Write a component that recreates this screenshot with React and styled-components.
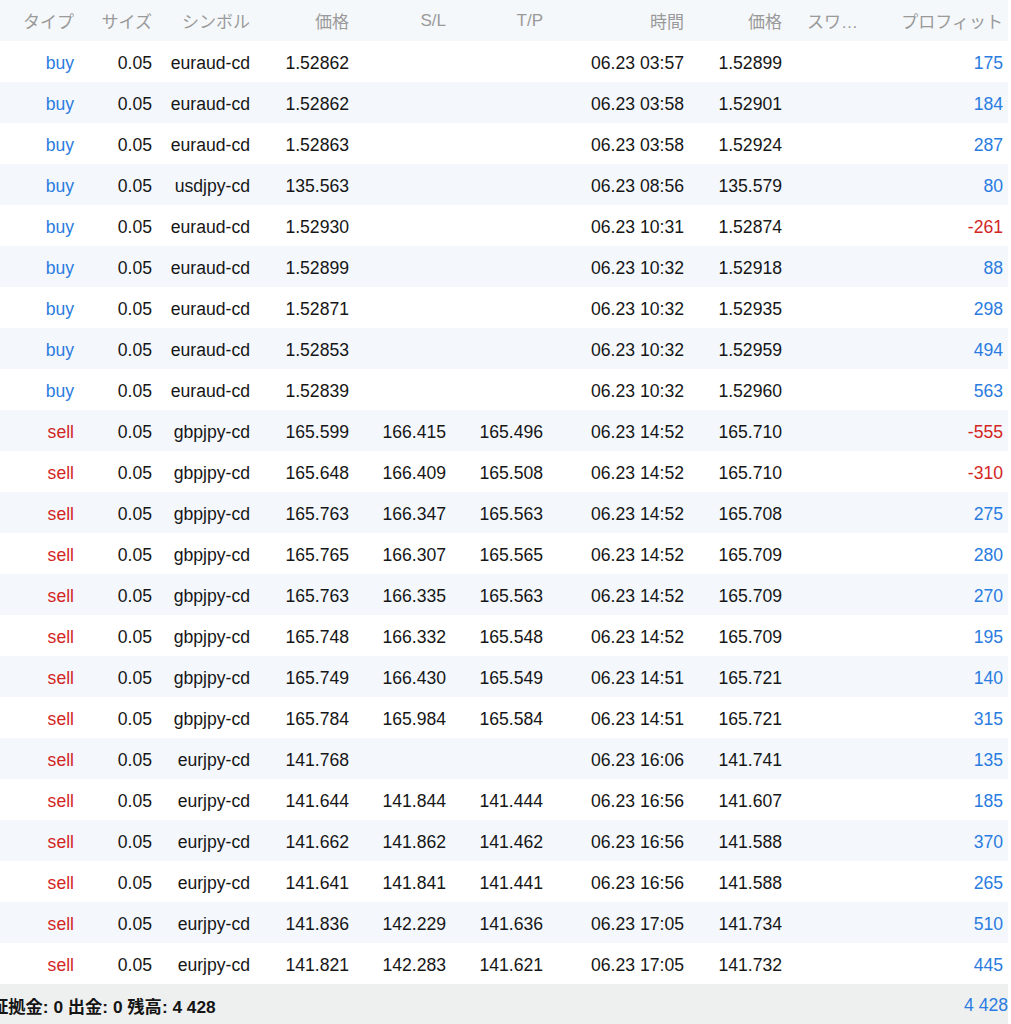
import React from "react";
import styled, { createGlobalStyle } from "styled-components";

const GlobalStyle = createGlobalStyle`
  html, body {
    margin: 0;
    padding: 0;
    background: #ffffff;
  }
  body {
    font-family: "Liberation Sans", "Noto Sans CJK JP", sans-serif;
    -webkit-font-smoothing: antialiased;
  }
`;

const COLS = "74px 78px 98px 99px 97px 97px 141px 98px 80px 141px";

const Page = styled.div`
  width: 1008px;
  height: 1024px;
  overflow: hidden;
  display: flex;
  flex-direction: column;
`;

const Header = styled.div`
  display: grid;
  grid-template-columns: ${COLS};
  height: 41px;
  align-items: center;
  background: #f5f8fb;
  color: #9a9a9a;
  font-size: 17px;
  font-family: "Liberation Sans", "Noto Sans CJK JP", sans-serif;
`;

const HeadCell = styled.div`
  text-align: ${(p) => (p.$left ? "left" : "right")};
  padding-left: ${(p) => (p.$left ? "25px" : "0")};
  white-space: nowrap;
  overflow: hidden;
`;

const Row = styled.div`
  box-sizing: border-box;
  display: grid;
  grid-template-columns: ${COLS};
  height: 41px;
  padding-top: 3px;
  align-items: center;
  background: ${(p) => (p.$alt ? "#f4f8fd" : "#ffffff")};
  font-size: 17.6px;
  color: #161616;
`;

const Cell = styled.div`
  text-align: right;
  white-space: nowrap;
  color: ${(p) => p.$color || "inherit"};
`;

const Footer = styled.div`
  box-sizing: border-box;
  height: 40px;
  padding-top: 2px;
  display: flex;
  align-items: center;
  justify-content: space-between;
  background: #eef0f0;
  overflow: hidden;
`;

const Summary = styled.div`
  margin-left: -9px;
  font-size: 17.3px;
  font-weight: bold;
  color: #151515;
  white-space: nowrap;
`;

const Total = styled.div`
  color: #2b7ce0;
  font-size: 17.6px;
`;

const BLUE = "#2b7ce0";
const RED = "#d3261f";

const rows = [
  ["buy", "euraud-cd", "1.52862", "", "", "06.23 03:57", "1.52899", "175"],
  ["buy", "euraud-cd", "1.52862", "", "", "06.23 03:58", "1.52901", "184"],
  ["buy", "euraud-cd", "1.52863", "", "", "06.23 03:58", "1.52924", "287"],
  ["buy", "usdjpy-cd", "135.563", "", "", "06.23 08:56", "135.579", "80"],
  ["buy", "euraud-cd", "1.52930", "", "", "06.23 10:31", "1.52874", "-261"],
  ["buy", "euraud-cd", "1.52899", "", "", "06.23 10:32", "1.52918", "88"],
  ["buy", "euraud-cd", "1.52871", "", "", "06.23 10:32", "1.52935", "298"],
  ["buy", "euraud-cd", "1.52853", "", "", "06.23 10:32", "1.52959", "494"],
  ["buy", "euraud-cd", "1.52839", "", "", "06.23 10:32", "1.52960", "563"],
  ["sell", "gbpjpy-cd", "165.599", "166.415", "165.496", "06.23 14:52", "165.710", "-555"],
  ["sell", "gbpjpy-cd", "165.648", "166.409", "165.508", "06.23 14:52", "165.710", "-310"],
  ["sell", "gbpjpy-cd", "165.763", "166.347", "165.563", "06.23 14:52", "165.708", "275"],
  ["sell", "gbpjpy-cd", "165.765", "166.307", "165.565", "06.23 14:52", "165.709", "280"],
  ["sell", "gbpjpy-cd", "165.763", "166.335", "165.563", "06.23 14:52", "165.709", "270"],
  ["sell", "gbpjpy-cd", "165.748", "166.332", "165.548", "06.23 14:52", "165.709", "195"],
  ["sell", "gbpjpy-cd", "165.749", "166.430", "165.549", "06.23 14:51", "165.721", "140"],
  ["sell", "gbpjpy-cd", "165.784", "165.984", "165.584", "06.23 14:51", "165.721", "315"],
  ["sell", "eurjpy-cd", "141.768", "", "", "06.23 16:06", "141.741", "135"],
  ["sell", "eurjpy-cd", "141.644", "141.844", "141.444", "06.23 16:56", "141.607", "185"],
  ["sell", "eurjpy-cd", "141.662", "141.862", "141.462", "06.23 16:56", "141.588", "370"],
  ["sell", "eurjpy-cd", "141.641", "141.841", "141.441", "06.23 16:56", "141.588", "265"],
  ["sell", "eurjpy-cd", "141.836", "142.229", "141.636", "06.23 17:05", "141.734", "510"],
  ["sell", "eurjpy-cd", "141.821", "142.283", "141.621", "06.23 17:05", "141.732", "445"],
];

const App = () => {
  return (
    <>
      <GlobalStyle />
      <Page lang="ja">
        <Header>
          <HeadCell>タイプ</HeadCell>
          <HeadCell>サイズ</HeadCell>
          <HeadCell>シンボル</HeadCell>
          <HeadCell>価格</HeadCell>
          <HeadCell>S/L</HeadCell>
          <HeadCell>T/P</HeadCell>
          <HeadCell>時間</HeadCell>
          <HeadCell>価格</HeadCell>
          <HeadCell $left>スワ…</HeadCell>
          <HeadCell>プロフィット</HeadCell>
        </Header>
        {rows.map((r, i) => (
          <Row key={i} $alt={i % 2 === 1}>
            <Cell $color={r[0] === "buy" ? BLUE : RED}>{r[0]}</Cell>
            <Cell>0.05</Cell>
            <Cell>{r[1]}</Cell>
            <Cell>{r[2]}</Cell>
            <Cell>{r[3]}</Cell>
            <Cell>{r[4]}</Cell>
            <Cell>{r[5]}</Cell>
            <Cell>{r[6]}</Cell>
            <Cell></Cell>
            <Cell $color={r[7].startsWith("-") ? RED : BLUE}>{r[7]}</Cell>
          </Row>
        ))}
        <Footer>
          <Summary>証拠金: 0 出金: 0 残高: 4 428</Summary>
          <Total>4 428</Total>
        </Footer>
      </Page>
    </>
  );
};

export default App;
